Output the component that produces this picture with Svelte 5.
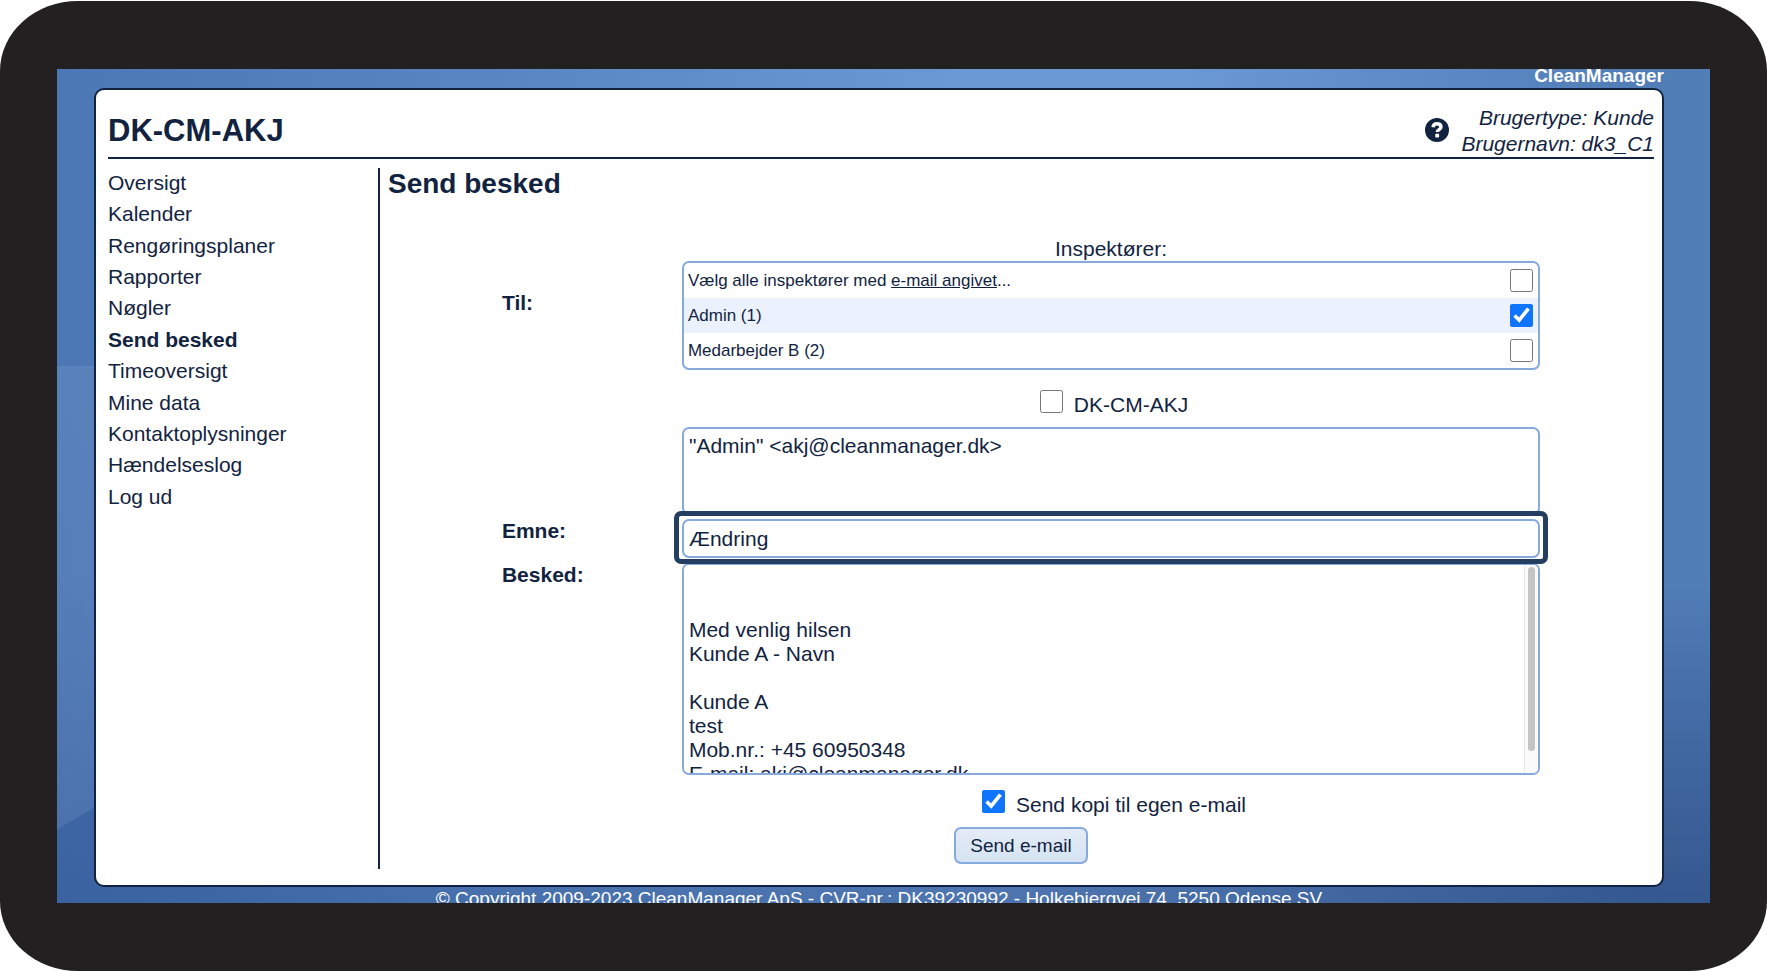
<script lang="ts">
  const menu = [
    "Oversigt",
    "Kalender",
    "Rengøringsplaner",
    "Rapporter",
    "Nøgler",
    "Send besked",
    "Timeoversigt",
    "Mine data",
    "Kontaktoplysninger",
    "Hændelseslog",
    "Log ud",
  ];
  const active = "Send besked";

  let inspectors = $state([
    { id: 1, name: "Admin", checked: true },
    { id: 2, name: "Medarbejder B", checked: false },
  ]);
  let selectAll = $state(false);
  let toCompany = $state(false);
  let copyToSelf = $state(true);
  let recipients = $state('"Admin" <akj@cleanmanager.dk>');
  let subject = $state("Ændring");
  let message = $state(
    [
      "",
      "",
      "Med venlig hilsen",
      "Kunde A - Navn",
      "",
      "Kunde A",
      "test",
      "Mob.nr.: +45 60950348",
      "E-mail: akj@cleanmanager.dk",
    ].join("\n")
  );
</script>

<div class="device">
  <div class="screen">
    <div class="brand">CleanManager</div>

    <div class="card">
      <header>
        <h1>DK-CM-AKJ</h1>
        <a class="help" href="#help" aria-label="Hjælp">
          <svg viewBox="0 0 24 24" width="24" height="24">
            <circle cx="12" cy="12" r="12" />
            <path d="M8 9.2C8.3 6.9 9.8 5.8 12 5.8c2.3 0 4 1.200 4 3.200 0 2.700-3.700 2.600-3.700 5" />
            <rect x="10.300" y="15.800" width="3.800" height="3.600" rx="0.600" />
          </svg>
        </a>
        <div class="user">
          <div>Brugertype: Kunde</div>
          <div>Brugernavn: dk3_C1</div>
        </div>
      </header>

      <div class="body">
        <nav>
          <ul>
            {#each menu as item}
              <li><a href="#{item}" class:active={item === active}>{item}</a></li>
            {/each}
          </ul>
        </nav>

        <main>
          <h2>Send besked</h2>

          <form onsubmit={(e) => e.preventDefault()}>
            <div class="row to">
              <span class="label">Til:</span>
              <div class="control">
                <div class="caption">Inspektører:</div>
                <table>
                  <tbody>
                    <tr>
                      <td>
                        <label for="all">Vælg alle inspektører med <u>e-mail angivet</u>...</label>
                      </td>
                      <td class="tick"><input id="all" type="checkbox" bind:checked={selectAll} /></td>
                    </tr>
                    {#each inspectors as person}
                      <tr class:selected={person.checked}>
                        <td><label for="p{person.id}">{person.name} ({person.id})</label></td>
                        <td class="tick">
                          <input id="p{person.id}" type="checkbox" bind:checked={person.checked} />
                        </td>
                      </tr>
                    {/each}
                  </tbody>
                </table>
                <div class="check company">
                  <input id="company" type="checkbox" bind:checked={toCompany} />
                  <label for="company">DK-CM-AKJ</label>
                </div>
                <textarea class="recipients" aria-label="Modtagere" bind:value={recipients}></textarea>
              </div>
            </div>

            <div class="row subject">
              <label class="label" for="subject">Emne:</label>
              <div class="control highlight">
                <input id="subject" type="text" bind:value={subject} />
              </div>
            </div>

            <div class="row">
              <label class="label" for="message">Besked:</label>
              <div class="control">
                <div class="scroller">
                  <textarea id="message" class="message" bind:value={message}></textarea>
                  <div class="track"><div class="thumb"></div></div>
                </div>
                <div class="check copy">
                  <input id="copy" type="checkbox" bind:checked={copyToSelf} />
                  <label for="copy">Send kopi til egen e-mail</label>
                </div>
              </div>
            </div>

            <button type="submit">Send e-mail</button>
          </form>
        </main>
      </div>
    </div>

    <footer>
      © Copyright 2009-2023 CleanManager ApS - CVR-nr.: DK39230992 - Holkebjergvej 74, 5250 Odense SV
    </footer>
  </div>
</div>

<style>
  :global(body) {
    margin: 0;
    background: #fff;
  }
  .device {
    box-sizing: border-box;
    min-height: 970px;
    margin-top: 1px;
    padding: 68px 57px;
    background: #222021;
    border-radius: 78px / 70px;
    color: #12233f;
    font-family: "Liberation Sans", Arial, sans-serif;
    font-size: 21px;
    line-height: 24px;
  }
  .screen {
    height: 834px;
    padding: 0 46px 0 37px;
    overflow: hidden;
    background:
      linear-gradient(149deg, transparent 19px, rgba(44, 84, 150, 0.45) 20px) left bottom / 37px 96px no-repeat,
      linear-gradient(rgba(255, 255, 255, 0.07), rgba(255, 255, 255, 0.03)) 0 297px / 37px 537px no-repeat,
      linear-gradient(90deg, rgba(44, 84, 150, 0.35), rgba(44, 84, 150, 0.1) 25%, rgba(36, 66, 120, 0.2) 60%, rgba(36, 66, 120, 0.5)) 37px 100% / calc(100% - 83px) 36px no-repeat,
      linear-gradient(transparent, rgba(36, 66, 120, 0.5)) right bottom / 46px 320px no-repeat,
      linear-gradient(transparent 500px, rgba(48, 80, 140, 0.35)),
      linear-gradient(90deg, #4c77b5, #5c8ac5 33%, #6b99d4 55%, #6b99d4 68%, #527eb8 95%);
  }
  .brand {
    height: 19px;
    color: #fff;
    font-size: 19px;
    font-weight: bold;
    line-height: 14px;
    text-align: right;
  }
  .card {
    box-sizing: border-box;
    min-height: 797px;
    padding: 12px 8px 16px 12px;
    background: #fff;
    border: 2px solid #12233f;
    border-radius: 10px;
  }
  header {
    display: flex;
    align-items: center;
    height: 55px;
    border-bottom: 2px solid #12233f;
  }
  h1 {
    flex: 1;
    margin: 0;
    font-size: 31px;
    line-height: 36px;
    padding-top: 2px;
  }
  .help {
    display: flex;
    margin-right: 12px;
  }
  .help circle {
    fill: #12233f;
  }
  .help path {
    fill: none;
    stroke: #fff;
    stroke-width: 3.4;
  }
  .help rect {
    fill: #fff;
  }
  .user {
    padding-top: 2px;
    font-style: italic;
    line-height: 26px;
    text-align: right;
  }
  .body {
    display: grid;
    grid-template-columns: 272px 1fr;
    margin-top: 9px;
  }
  nav {
    min-height: 701px;
    border-right: 2px solid #12233f;
  }
  ul {
    display: grid;
    grid-auto-rows: 1fr;
    height: 345px;
    margin: 0;
    padding: 0;
    line-height: 30px;
    list-style: none;
  }
  nav a {
    color: inherit;
    text-decoration: none;
  }
  nav a.active {
    font-weight: bold;
  }
  main {
    padding-left: 8px;
  }
  h2 {
    margin: 0;
    font-size: 28px;
    line-height: 32px;
  }
  form {
    display: grid;
    width: 82%;
    margin: 37px auto 0;
  }
  .row {
    display: grid;
    grid-template-columns: 180px 1fr;
  }
  .label {
    font-weight: bold;
  }
  .to .label {
    padding-top: 54px;
  }
  .subject {
    margin: 4px 0 5px;
  }
  .caption {
    text-align: center;
  }
  table {
    width: 100%;
    border: 2px solid #86a9de;
    border-radius: 7px;
    border-collapse: separate;
    border-spacing: 0;
    font-size: 17px;
  }
  td {
    height: 35px;
    padding: 0 4px;
  }
  tr.selected td {
    background: #ebf2fe;
  }
  .tick {
    width: 24px;
  }
  input[type="checkbox"] {
    display: block;
    width: 23px;
    height: 23px;
    margin: 0;
    accent-color: #0f75ff;
  }
  .check {
    display: flex;
    justify-content: center;
    gap: 11px;
    padding-left: 6px;
  }
  .check label {
    padding-top: 3px;
  }
  .company {
    margin: 20px 0 10px;
  }
  .copy {
    margin: 15px 0 10px;
  }
  textarea,
  input[type="text"] {
    display: block;
    box-sizing: border-box;
    width: 100%;
    margin: 0;
    padding: 5px;
    background: #fff;
    border: 2px solid #86a9de;
    border-radius: 7px;
    outline: none;
    color: inherit;
    font: inherit;
    resize: none;
    scrollbar-width: none;
  }
  .recipients {
    height: 88px;
  }
  input[type="text"] {
    height: 39px;
  }
  .message {
    height: 212px;
  }
  .scroller {
    position: relative;
  }
  .track {
    position: absolute;
    top: 2px;
    right: 2px;
    bottom: 2px;
    box-sizing: border-box;
    width: 14px;
    padding: 2px 3px;
    background: #fafafa;
    border-left: 1px solid #e8e8e8;
    border-radius: 0 5px 5px 0;
    pointer-events: none;
  }
  .thumb {
    width: 7px;
    height: 90%;
    background: #c4c4c4;
    border-radius: 4px;
  }
  .highlight {
    position: relative;
    z-index: 1;
  }
  .highlight::after {
    content: "";
    position: absolute;
    inset: -8px -8px -6px;
    border: 5px solid #243e61;
    border-radius: 7px;
    pointer-events: none;
  }
  button {
    justify-self: center;
    height: 37px;
    padding: 0 14px;
    background: linear-gradient(#e4ecf6, #d5e3f2);
    border: 2px solid #86a9de;
    border-radius: 7px;
    color: inherit;
    font-family: inherit;
    font-size: 19px;
  }
  footer {
    color: #fff;
    font-size: 19px;
    text-align: center;
    white-space: nowrap;
  }
</style>
